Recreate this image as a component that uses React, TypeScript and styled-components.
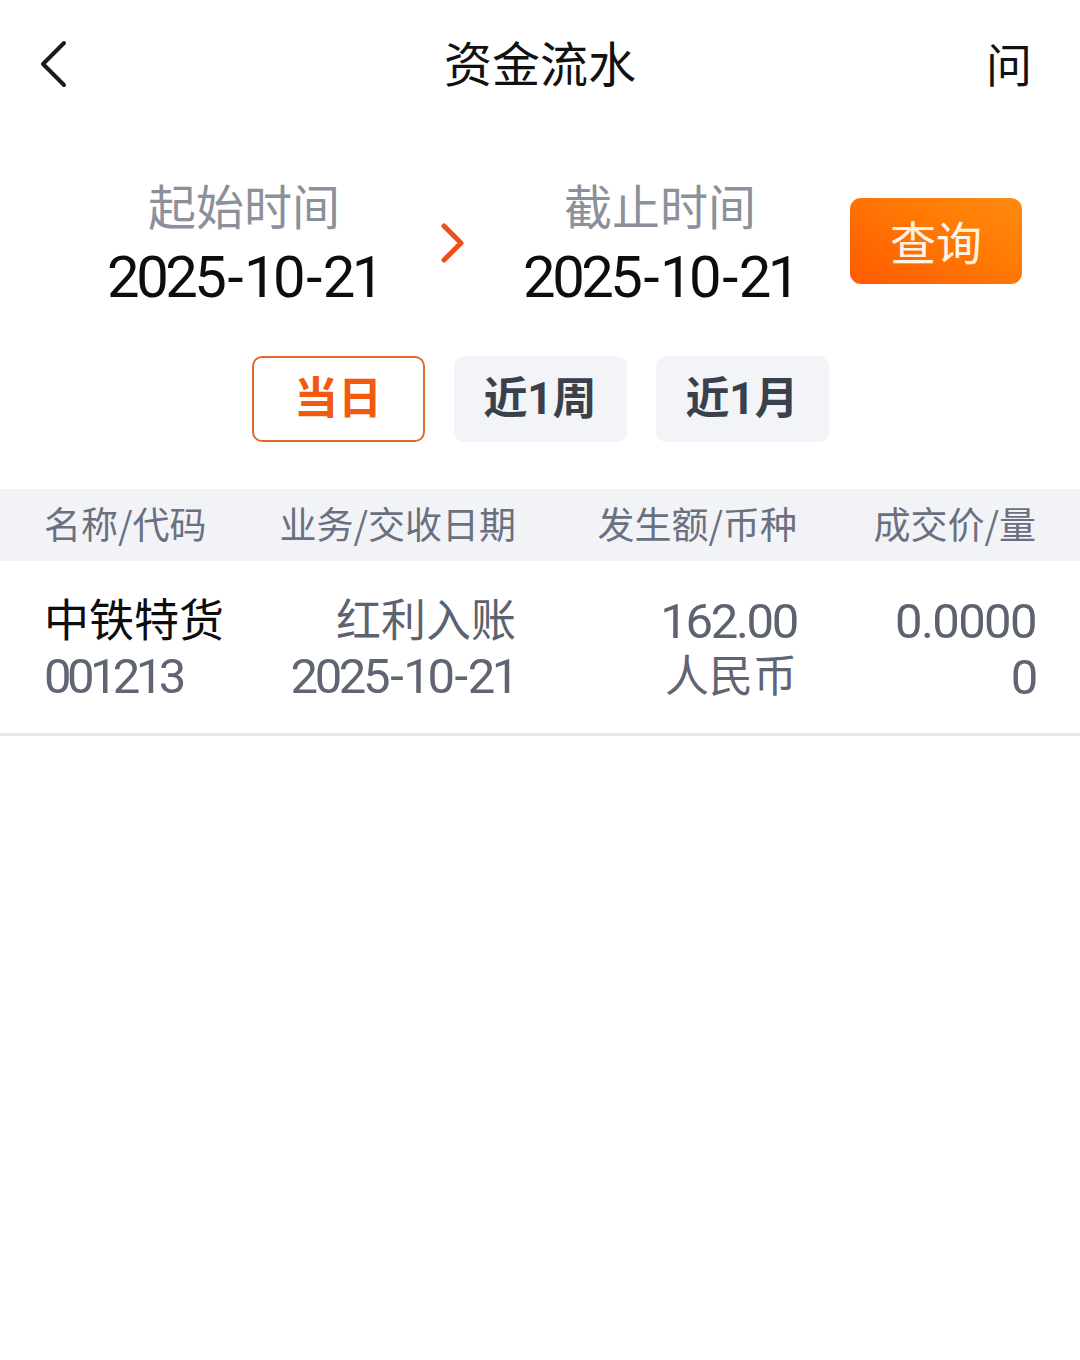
import React from "react";
import styled, { createGlobalStyle } from "styled-components";

const GlobalStyle = createGlobalStyle`
  html, body {
    margin: 0;
    padding: 0;
    background: #ffffff;
  }
  body {
    font-family: "Roboto", "Noto Sans CJK SC", sans-serif;
    color: #111111;
  }
  * { box-sizing: border-box; }
`;

const Page = styled.div`
  width: 1080px;
  min-height: 1360px;
  background: #ffffff;
  display: flex;
  flex-direction: column;
`;

const NavBar = styled.header`
  height: 128px;
  padding: 0 48px 0 30px;
  display: grid;
  grid-template-columns: 1fr auto 1fr;
  align-items: center;
`;

const IconButton = styled.button`
  width: 48px;
  height: 56px;
  border: none;
  background: transparent;
  padding: 0;
  display: flex;
  align-items: center;
  justify-content: center;
  cursor: pointer;
  justify-self: start;
`;

const Title = styled.h1`
  margin: 0 0 6px;
  font-family: "Noto Sans CJK SC", sans-serif;
  font-size: 48px;
  font-weight: 400;
  line-height: 60px;
  color: #111111;
  padding-left: 18px;
`;

const HelpGlyph = styled.span`
  justify-self: end;
  font-family: "Noto Sans CJK SC", sans-serif;
  font-size: 46px;
  line-height: 56px;
  color: #111111;
  margin-bottom: 4px;
`;

const DateRow = styled.section`
  margin-top: 46px;
  padding-left: 94px;
  display: flex;
  align-items: center;
`;

const DateBlock = styled.div`
  width: 300px;
  display: flex;
  flex-direction: column;
  align-items: center;
  gap: 9px;
`;

const DateLabel = styled.div`
  font-family: "Noto Sans CJK SC", sans-serif;
  font-size: 48px;
  line-height: 60px;
  color: #8b909b;
`;

const DateValue = styled.div`
  font-family: "Roboto", sans-serif;
  font-size: 58px;
  line-height: 68px;
  letter-spacing: -3.5px;
  color: #0d0d0d;
`;

const Dash = styled.span<{ $gap?: number }>`
  margin: 0 ${(p) => p.$gap ?? 4}px;
`;

const ArrowWrap = styled.div`
  width: 116px;
  display: flex;
  justify-content: center;
`;

const QueryButton = styled.button`
  margin-left: 40px;
  width: 172px;
  height: 86px;
  border: none;
  border-radius: 11px;
  background: linear-gradient(30deg, #ff5a00 0%, #ff7a05 60%, #ff8b12 100%);
  color: #fff4e4;
  font-family: "Noto Sans CJK SC", sans-serif;
  font-size: 46px;
  line-height: 1;
  display: flex;
  align-items: center;
  justify-content: center;
  padding: 0 0 2px;
  margin-top: -4px;
`;

const RangeRow = styled.div`
  margin-top: 45px;
  display: flex;
  justify-content: center;
  gap: 29px;
`;

const RangeButton = styled.button<{ $active?: boolean }>`
  width: 173px;
  height: 86px;
  border-radius: 10px;
  border: 2.5px solid ${(p) => (p.$active ? "#e36a2c" : "transparent")};
  background: ${(p) => (p.$active ? "#ffffff" : "#f3f4f7")};
  color: ${(p) => (p.$active ? "#f25a0f" : "#3a404c")};
  font-family: "Roboto", "Noto Sans CJK SC", sans-serif;
  font-size: 44px;
  font-weight: 700;
  line-height: 1;
  display: flex;
  align-items: center;
  justify-content: center;
  padding: 0;
`;

const TableHeader = styled.div`
  margin-top: 47px;
  height: 72px;
  padding: 0 44px 5px;
  background: #f2f3f7;
  display: grid;
  grid-template-columns: 192px 280px 281px 1fr;
  align-items: center;
`;

const HeaderCell = styled.div<{ $align?: "left" | "right" }>`
  font-family: "Noto Sans CJK SC", sans-serif;
  font-size: 37px;
  line-height: 48px;
  color: #6b7080;
  text-align: ${(p) => p.$align ?? "right"};
`;

const TableRow = styled.div`
  padding: 33px 44px 26px;
  border-bottom: 3px solid #e7e8ec;
  display: grid;
  grid-template-columns: 192px 280px 281px 1fr;
`;

const Cell = styled.div<{ $align?: "left" | "right" }>`
  display: flex;
  flex-direction: column;
  align-items: ${(p) => (p.$align === "left" ? "flex-start" : "flex-end")};
`;

const Primary = styled.div<{ $dark?: boolean }>`
  font-family: "Roboto", "Noto Sans CJK SC", sans-serif;
  font-size: 45px;
  line-height: 55px;
  color: ${(p) => (p.$dark ? "#0d0d0d" : "#5c6270")};
  white-space: nowrap;
`;

const Num = styled.span<{ $spacing?: number }>`
  font-family: "Roboto", sans-serif;
  font-size: 49px;
  letter-spacing: ${(p) => p.$spacing ?? -2.3}px;
`;

const Secondary = styled.div`
  font-family: "Roboto", "Noto Sans CJK SC", sans-serif;
  font-size: 44px;
  line-height: 55px;
  color: #5f6573;
  white-space: nowrap;
`;

const BackIcon = () => (
  <svg width="34" height="50" viewBox="0 0 34 50" fill="none">
    <path
      d="M27 4 L6 25 L27 46"
      stroke="#1a1a1a"
      strokeWidth="4"
      strokeLinecap="round"
      strokeLinejoin="round"
    />
  </svg>
);

const RightArrow = () => (
  <svg width="30" height="44" viewBox="0 0 30 44" fill="none">
    <path
      d="M7 5 L24 22 L7 39"
      stroke="#ee4f18"
      strokeWidth="5"
      strokeLinecap="round"
      strokeLinejoin="round"
    />
  </svg>
);

const DateText = ({ value, gap }: { value: string; gap?: number }) => {
  const parts = value.split("-");
  return (
    <>
      {parts.map((p, i) => (
        <React.Fragment key={i}>
          {i > 0 && <Dash $gap={gap}>-</Dash>}
          {p}
        </React.Fragment>
      ))}
    </>
  );
};

export default function App() {
  return (
    <>
      <GlobalStyle />
      <Page>
        <NavBar>
          <IconButton aria-label="返回">
            <BackIcon />
          </IconButton>
          <Title>资金流水</Title>
          <HelpGlyph>问</HelpGlyph>
        </NavBar>

        <DateRow>
          <DateBlock>
            <DateLabel>起始时间</DateLabel>
            <DateValue>
              <DateText value="2025-10-21" />
            </DateValue>
          </DateBlock>
          <ArrowWrap>
            <RightArrow />
          </ArrowWrap>
          <DateBlock>
            <DateLabel>截止时间</DateLabel>
            <DateValue>
              <DateText value="2025-10-21" />
            </DateValue>
          </DateBlock>
          <QueryButton>查询</QueryButton>
        </DateRow>

        <RangeRow>
          <RangeButton $active>当日</RangeButton>
          <RangeButton>近1周</RangeButton>
          <RangeButton>近1月</RangeButton>
        </RangeRow>

        <TableHeader>
          <HeaderCell $align="left">名称/代码</HeaderCell>
          <HeaderCell>业务/交收日期</HeaderCell>
          <HeaderCell>发生额/币种</HeaderCell>
          <HeaderCell>成交价/量</HeaderCell>
        </TableHeader>

        <TableRow>
          <Cell $align="left">
            <Primary $dark>中铁特货</Primary>
            <Secondary>
              <Num $spacing={-4.6}>001213</Num>
            </Secondary>
          </Cell>
          <Cell>
            <Primary>红利入账</Primary>
            <Secondary>
              <Num $spacing={-3.4}>
                <DateText value="2025-10-21" gap={3} />
              </Num>
            </Secondary>
          </Cell>
          <Cell>
            <Primary>
              <Num>162.00</Num>
            </Primary>
            <Secondary>人民币</Secondary>
          </Cell>
          <Cell>
            <Primary>
              <Num $spacing={-1.6}>0.0000</Num>
            </Primary>
            <Secondary>
              <Num>0</Num>
            </Secondary>
          </Cell>
        </TableRow>
      </Page>
    </>
  );
}
